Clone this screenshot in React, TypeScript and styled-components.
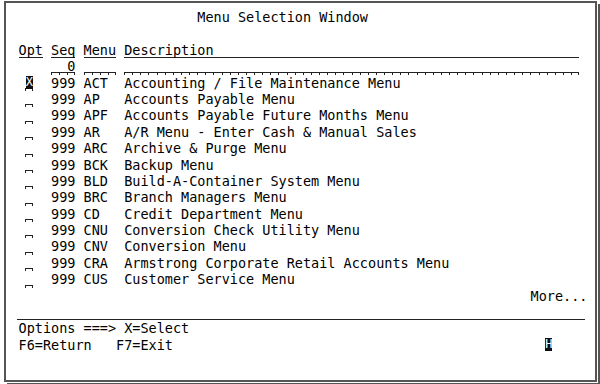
import React from "react";
import styled, { createGlobalStyle } from "styled-components";

const ROW = 16.4;

const GlobalStyle = createGlobalStyle`
  html, body {
    margin: 0;
    padding: 0;
    background: #ffffff;
  }
  body {
    width: 600px;
    height: 384px;
    overflow: hidden;
  }
`;

const Window = styled.div`
  box-sizing: border-box;
  width: 593px;
  height: 381px;
  margin: 1px 0 0 4px;
  border: 2px solid #555555;
  box-shadow: 1px 1px 0 #ffffff, 3px 3px 0 #555555;
  padding: 6px 0 0 12.5px;
  font-family: "DejaVu Sans Mono", monospace;
  font-size: 13.5px;
  color: #000000;
`;

const Line = styled.div`
  height: ${ROW}px;
  line-height: ${ROW}px;
  white-space: pre;
`;

const Rule = styled.div`
  height: ${ROW}px;
  width: 568px;
  margin-left: -1.5px;
  box-sizing: border-box;
  border-bottom: 1px solid #222222;
`;

const Under = styled.span<{ $w: number }>`
  display: inline-block;
  vertical-align: top;
  width: ${(p) => p.$w}ch;
  height: ${ROW}px;
  box-sizing: border-box;
  border-bottom: 1px solid #222222;
`;

const Field = styled.span<{ $w: number }>`
  display: inline-block;
  vertical-align: top;
  width: ${(p) => p.$w}ch;
  height: ${ROW}px;
  background-image: linear-gradient(#222, #222),
    repeating-linear-gradient(to right, #222 0 1px, transparent 1px 1ch),
    linear-gradient(#222, #222);
  background-size: 100% 1px, 100% 3px, 1px 3px;
  background-position: 0 calc(100% - 2px), 0 100%, 100% 100%;
  background-repeat: no-repeat;
`;

const OptField = styled(Field)`
  margin-left: -1.5px;
  margin-right: 1.5px;
  text-align: center;
`;

const Reverse = styled.span<{ $shift?: number }>`
  display: inline-block;
  vertical-align: top;
  width: 7px;
  height: 13px;
  margin-top: 1px;
  margin-left: ${(p) => p.$shift ?? 0}px;
  line-height: 13px;
  background: #111111;
  color: #ffffff;
  text-align: center;
  font-size: 12px;
`;

const menus = [
  ["ACT", "Accounting / File Maintenance Menu"],
  ["AP", "Accounts Payable Menu"],
  ["APF", "Accounts Payable Future Months Menu"],
  ["AR", "A/R Menu - Enter Cash & Manual Sales"],
  ["ARC", "Archive & Purge Menu"],
  ["BCK", "Backup Menu"],
  ["BLD", "Build-A-Container System Menu"],
  ["BRC", "Branch Managers Menu"],
  ["CD", "Credit Department Menu"],
  ["CNU", "Conversion Check Utility Menu"],
  ["CNV", "Conversion Menu"],
  ["CRA", "Armstrong Corporate Retail Accounts Menu"],
  ["CUS", "Customer Service Menu"],
];

export default function App() {
  return (
    <>
      <GlobalStyle />
      <Window>
        <Line>{"                      Menu Selection Window"}</Line>
        <Line> </Line>
        <Line>
          <Under $w={3}>Opt</Under> <Under $w={3}>Seq</Under>{" "}
          <Under $w={4}>Menu</Under> <Under $w={56}>Description</Under>
        </Line>
        <Line>
          {"    "}
          <Field $w={3}>{"  0"}</Field> <Field $w={4} /> <Field $w={56} />
        </Line>
        {menus.map(([code, desc], i) => (
          <Line key={code}>
            {" "}
            <OptField $w={1}>{i === 0 ? <Reverse>X</Reverse> : ""}</OptField>
            {"  999 " + code.padEnd(4, " ") + " " + desc}
          </Line>
        ))}
        <Line>{"                                                               More..."}</Line>
        <Rule />
        <Line>{"Options ===> X=Select"}</Line>
        <Line>
          {"F6=Return   F7=Exit                                              "}
          <Reverse $shift={-1.5}>H</Reverse>
        </Line>
      </Window>
    </>
  );
}
